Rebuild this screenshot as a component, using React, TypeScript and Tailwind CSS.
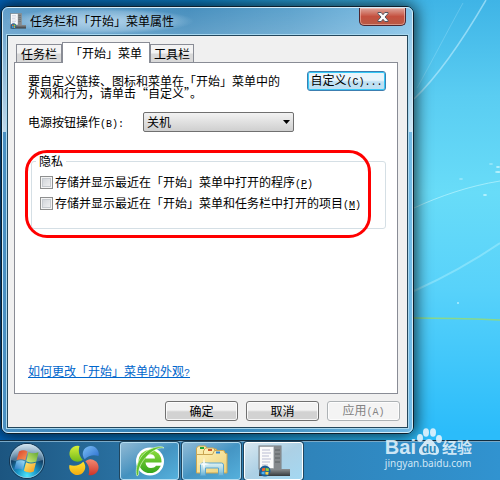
import type { ReactNode } from "react";

const TABS = [
  { id: "taskbar", label: "任务栏" },
  { id: "start", label: "「开始」菜单" },
  { id: "toolbars", label: "工具栏" },
];

const PRIVACY_OPTIONS = [
  { id: "programs", label: "存储并显示最近在「开始」菜单中打开的程序", accessKey: "P" },
  { id: "items", label: "存储并显示最近在「开始」菜单和任务栏中打开的项目", accessKey: "M" },
];

// Half-width latin, as the system font draws it next to 12px hanzi.
function Latin({ children }: { children: ReactNode }) {
  return (
    <span className="font-['Liberation_Mono','Noto_Sans_CJK_SC',monospace] text-[10px] leading-none">
      {children}
    </span>
  );
}

function TaskbarPanelIcon({ className }: { className: string }) {
  return (
    <svg viewBox="0 0 32 32" className={className} aria-hidden="true">
      <defs>
        <linearGradient id="panelBar" x1="0" y1="0" x2="0" y2="1">
          <stop offset="0" stopColor="#8b8f92" />
          <stop offset="1" stopColor="#35393c" />
        </linearGradient>
      </defs>
      <rect x="1" y="1" width="22" height="23" fill="#c9cdd0" stroke="#777c80" />
      <rect x="2" y="2" width="13" height="21" fill="#fafafa" />
      <path d="M4 5h8M4 8h9M4 11h7M4 14h9M4 17h8M4 20h6" stroke="#b9bcd2" />
      <rect x="16" y="1" width="7" height="23" fill="#85898c" />
      <path d="M17 5h5M17 9h5M17 13h5M17 17h5" stroke="#5b6063" />
      <rect x="1" y="24" width="31" height="7" fill="url(#panelBar)" />
      <circle cx="7" cy="26" r="5.5" fill="#1c5f96" />
      <path d="M4 23.5l3-.8v3l-3 .5z" fill="#f2642c" />
      <path d="M7.6 23l3.2.6v2.6l-3.2-.4z" fill="#8fd23e" />
      <path d="M3.6 27l3-.4v3l-3-.6z" fill="#50b4f0" />
      <path d="M7.4 26.8l3.2.3-.4 2.6-2.8-.2z" fill="#ffd042" />
    </svg>
  );
}

function StartOrb() {
  return (
    <svg viewBox="0 0 38 38" className="size-[38px]" aria-hidden="true">
      <defs>
        <radialGradient id="orb" cx="50%" cy="92%" r="85%">
          <stop offset="0" stopColor="#4fe6fb" />
          <stop offset="0.35" stopColor="#1793c6" />
          <stop offset="0.7" stopColor="#123e64" />
          <stop offset="1" stopColor="#5f8bab" />
        </radialGradient>
        <linearGradient id="orbShine" x1="0" y1="0" x2="0" y2="1">
          <stop offset="0" stopColor="#e3f0f8" stopOpacity="0.85" />
          <stop offset="1" stopColor="#b5d0e2" stopOpacity="0.25" />
        </linearGradient>
        <linearGradient id="flagRed" x1="0" y1="0" x2="1" y2="1">
          <stop offset="0" stopColor="#d8402a" />
          <stop offset="1" stopColor="#f99a58" />
        </linearGradient>
        <linearGradient id="flagGreen" x1="1" y1="0" x2="0" y2="1">
          <stop offset="0" stopColor="#5fa62e" />
          <stop offset="1" stopColor="#d3ec7c" />
        </linearGradient>
        <linearGradient id="flagBlue" x1="0" y1="1" x2="1" y2="0">
          <stop offset="0" stopColor="#1e72c0" />
          <stop offset="1" stopColor="#a3e2fa" />
        </linearGradient>
        <linearGradient id="flagYellow" x1="1" y1="1" x2="0" y2="0">
          <stop offset="0" stopColor="#f19a1d" />
          <stop offset="1" stopColor="#ffe975" />
        </linearGradient>
      </defs>
      <circle cx="19" cy="19" r="17.5" fill="url(#orb)" stroke="#11314c" />
      <circle cx="19" cy="19" r="16.6" fill="none" stroke="#a8cfe5" strokeOpacity="0.7" />
      <path d="M3 18a16 16 0 0 1 32 0c-9 3-22 3-32 0z" fill="url(#orbShine)" />
      <path d="M11 9.500c3-1.600 6-1.500 8.500 0L17.300 18.300c-2.500-1.500-5.500-1.500-8.700-.2z" fill="url(#flagRed)" />
      <path d="M20.500 10c3 1.700 6 1.600 10 .3L28.300 19.500c-3.500 1.400-6.500 1.200-10-.6z" fill="url(#flagGreen)" />
      <path d="M8.300 19.300c3-1.400 6-1.300 8.700.1L14.800 28c-2.500-1.500-5.200-1.500-8.700-.2z" fill="url(#flagBlue)" />
      <path d="M18 20.200c3 1.600 6.500 1.700 10 .3L25.700 29.500c-3.300 1.500-6.500 1.200-9.800-.7z" fill="url(#flagYellow)" />
    </svg>
  );
}

function PetalsIcon() {
  const petal = "M10.500 1A8 8 0 1 0 13.700 14.800Q8.200 9 10.500 1z";
  return (
    <svg viewBox="0 0 30 31" className="h-[31px] w-[30px]" aria-hidden="true">
      <defs>
        <linearGradient id="petalGreen" x1="0" y1="0" x2="0" y2="1">
          <stop offset="0" stopColor="#d8f03a" />
          <stop offset="1" stopColor="#6fb81c" />
        </linearGradient>
        <linearGradient id="petalBlue" x1="0" y1="1" x2="1" y2="0">
          <stop offset="0" stopColor="#7cc0f8" />
          <stop offset="1" stopColor="#2a6ccc" />
        </linearGradient>
        <linearGradient id="petalRed" x1="0" y1="1" x2="0" y2="0">
          <stop offset="0" stopColor="#f28a72" />
          <stop offset="1" stopColor="#cf3428" />
        </linearGradient>
        <linearGradient id="petalYellow" x1="1" y1="0" x2="0" y2="0">
          <stop offset="0" stopColor="#ffe52f" />
          <stop offset="1" stopColor="#f2aa12" />
        </linearGradient>
      </defs>
      <path d={petal} fill="url(#petalGreen)" />
      <path d={petal} fill="url(#petalBlue)" transform="rotate(90 15 15.5)" />
      <path d={petal} fill="url(#petalRed)" transform="rotate(180 15 15.5)" />
      <path d={petal} fill="url(#petalYellow)" transform="rotate(270 15 15.5)" />
    </svg>
  );
}

function BrowserIcon() {
  return (
    <svg viewBox="0 0 32 32" className="size-8" aria-hidden="true">
      <defs>
        <linearGradient id="browserGreen" x1="0" y1="0" x2="0" y2="1">
          <stop offset="0" stopColor="#8ddc3c" />
          <stop offset="1" stopColor="#35a51c" />
        </linearGradient>
      </defs>
      <circle cx="16" cy="16.500" r="14" fill="#ffffff" />
      <circle cx="16" cy="16.500" r="11.500" fill="url(#browserGreen)" />
      <path d="M11.500 13.500c.8-3 2.500-4.200 5-4.200s4.200 1.200 4.500 4.200z" fill="#ffffff" />
      <path d="M11.500 17.500H29v3.300h-7c-1 1.500-2.700 2.200-5 2.200-3.300 0-5.200-2-5.500-5.500z" fill="#ffffff" />
      <path
        d="M3 31C0 23 6 5 23 2c3-.6 6-.6 7 1-3-.6-6 .2-9 2C12 10 4 20 4.500 30z"
        fill="#62c22c"
        stroke="#e9ffd7"
        strokeWidth="0.6"
      />
    </svg>
  );
}

function ExplorerIcon() {
  return (
    <svg viewBox="0 0 34 32" className="h-8 w-[34px]" aria-hidden="true">
      <defs>
        <linearGradient id="folder" x1="0" y1="0" x2="1" y2="1">
          <stop offset="0" stopColor="#fff2b8" />
          <stop offset="1" stopColor="#ecd07a" />
        </linearGradient>
        <linearGradient id="stand" x1="0" y1="0" x2="0" y2="1">
          <stop offset="0" stopColor="#dff5fd" />
          <stop offset="1" stopColor="#67b5de" />
        </linearGradient>
      </defs>
      <path d="M1.500 27V3l2-2h7l2 3h9v23z" fill="url(#folder)" stroke="#c9a552" />
      <rect x="5" y="2" width="4" height="2" fill="#1fa534" />
      <path d="M8.500 27V6l2-3h8l2 3h9v21z" fill="url(#folder)" stroke="#c9a552" />
      <rect x="13" y="4" width="4" height="2" fill="#cb5528" />
      <path d="M1.500 28V9.500h16l2-4h9l2 3h1.500V28z" fill="url(#folder)" stroke="#c9a552" />
      <rect x="21" y="6.500" width="4" height="2" fill="#3287d5" />
      <path
        d="M5.500 30.500V20q0-2 2-2h19q2 0 2 2v10.500h-5V23h-13v7.500z"
        fill="url(#stand)"
        fillOpacity="0.9"
        stroke="#5ba6d0"
      />
      <path d="M9 12l1 6 5 1-5 1-1 6-1-6-5-1 5-1z" fill="#ffffff" fillOpacity="0.85" />
    </svg>
  );
}

function Wallpaper() {
  return (
    <svg
      viewBox="0 0 500 480"
      preserveAspectRatio="none"
      className="absolute inset-0 h-full w-full"
      aria-hidden="true"
    >
      <defs>
        <linearGradient id="skyDown" x1="0" y1="0" x2="0" y2="1">
          <stop offset="0" stopColor="#3fb4e6" />
          <stop offset="0.2" stopColor="#5acdf2" />
          <stop offset="0.4" stopColor="#68dcf8" />
          <stop offset="0.6" stopColor="#58d2fa" />
          <stop offset="0.9" stopColor="#2bbcfa" />
        </linearGradient>
        <linearGradient id="skyLeft" x1="0" y1="0" x2="1" y2="0">
          <stop offset="0" stopColor="#0262b8" />
          <stop offset="0.4" stopColor="#087fc9" stopOpacity="0.9" />
          <stop offset="0.83" stopColor="#2aa5da" stopOpacity="0" />
        </linearGradient>
      </defs>
      <rect width="500" height="480" fill="url(#skyDown)" />
      <rect width="500" height="480" fill="url(#skyLeft)" />
      <path d="M486 0C468 31 442 72 414 99" fill="none" stroke="#c2efff" strokeOpacity="0.6" strokeWidth="1.500" />
      <path d="M463 3C448 30 430 65 417 88" fill="none" stroke="#c2efff" strokeOpacity="0.25" />
      <path d="M414 208C440 196 469 186 500 181" fill="none" stroke="#c8f8ff" strokeOpacity="0.6" />
      <path d="M414 291C445 277 475 260 500 243" fill="none" stroke="#c8f8ff" strokeOpacity="0.35" strokeWidth="2" />
      <path d="M414 318C445 318 475 319 500 320" fill="none" stroke="#88d88c" strokeWidth="1.500" />
      <g fill="#d9fbff" fillOpacity="0.7">
        <ellipse cx="485" cy="195" rx="2" ry="1" />
        <ellipse cx="498" cy="172" rx="3" ry="1" />
        <ellipse cx="498" cy="167" rx="2" ry="1" />
        <ellipse cx="461" cy="179" rx="2" ry="1" fillOpacity="0.4" />
        <ellipse cx="491" cy="164" rx="2" ry="1" fillOpacity="0.4" />
        <circle cx="458" cy="303" r="1" />
      </g>
    </svg>
  );
}

function TitleBar() {
  return (
    <header className="flex h-[26px] items-start justify-between pr-[3px]">
      <div className="flex h-[26px] items-center gap-1 rounded-full bg-[radial-gradient(closest-side,rgba(225,242,255,0.65),rgba(225,242,255,0.3)_75%,transparent)] pr-5 pl-1">
        <TaskbarPanelIcon className="size-4" />
        <h1 className="text-xs text-black">任务栏和「开始」菜单属性</h1>
      </div>
      <button
        type="button"
        aria-label="关闭"
        className="flex h-[18px] w-[47px] items-center justify-center rounded-b-[5px] border border-t-0 border-[#4d2730] bg-linear-to-b from-[#dda69d] from-0% via-[#c4503f] via-50% to-[#b95a45] shadow-[inset_0_0_0_1px_rgba(255,220,210,0.45)]"
      >
        <svg viewBox="0 0 12 10" className="h-2.5 w-3" aria-hidden="true">
          <path
            d="M1 .5h3.200L6 2.700 7.800.5H11v1.200L8 5l3 3.300v1.200H7.800L6 7.300 4.200 9.500H1V8.300L4 5 1 1.700z"
            fill="#fbfbfb"
            stroke="#52545f"
          />
        </svg>
      </button>
    </header>
  );
}

function TabStrip() {
  return (
    <div role="tablist" className="flex items-end pl-0.5">
      {TABS.map((tab) =>
        tab.id === "start" ? (
          <button
            key={tab.id}
            type="button"
            role="tab"
            aria-selected="true"
            className="relative -mb-px h-[21px] w-[88px] border border-b-0 border-[#898c95] bg-white pb-px text-xs leading-none whitespace-nowrap"
          >
            {tab.label}
          </button>
        ) : (
          <button
            key={tab.id}
            type="button"
            role="tab"
            aria-selected="false"
            className="h-[18px] border border-b-0 border-[#898c95] bg-linear-to-b from-[#f3f3f3] from-45% to-[#d9d9d9] to-55% text-xs leading-none whitespace-nowrap first:w-[46px] last:w-[44px]"
          >
            {tab.label}
          </button>
        ),
      )}
    </div>
  );
}

function StartMenuPanel() {
  return (
    <div
      role="tabpanel"
      className="flex min-h-[332px] flex-col border border-[#898c95] bg-white pt-2 pr-[11px] pb-3.5 pl-[13px]"
    >
      <div className="flex items-start justify-between">
        <p className="max-w-[256px] pt-1 text-xs leading-3">
          要自定义链接、图标和菜单在「开始」菜单中的外观和行为，请单击“自定义”。
        </p>
        <button
          type="button"
          className="h-5 w-[79px] rounded-[3px] border border-[#3c7fb1] bg-linear-to-b from-[#eaf5fb] from-45% to-[#bfe0f2] to-55% text-xs leading-none whitespace-nowrap shadow-[inset_0_0_0_1px_#35c9f7]"
        >
          自定义<Latin>(C)...</Latin>
        </button>
      </div>

      <div className="mt-[13px] flex items-center">
        <label htmlFor="power" className="w-[115px] text-xs leading-5">
          电源按钮操作<Latin>(B):</Latin>
        </label>
        <div className="relative">
          <select
            id="power"
            defaultValue="shutdown"
            className="block h-5 w-[151px] appearance-none rounded-[2px] border border-[#707070] bg-linear-to-b from-[#f2f2f2] to-[#cfcfcf] pl-[3px] text-xs leading-none"
          >
            <option value="shutdown">关机</option>
            <option value="restart">重新启动</option>
            <option value="sleep">睡眠</option>
          </select>
          <svg
            viewBox="0 0 7 4"
            className="pointer-events-none absolute top-2 right-1 h-1 w-[7px]"
            aria-hidden="true"
          >
            <path d="M0 0h7L3.500 4z" fill="#000000" />
          </svg>
        </div>
      </div>

      <div className="relative mt-[22px] ml-[3px]">
        <fieldset className="h-[75px] rounded-[3px] border border-[#d5dfe5] px-2">
          <legend className="-ml-1 px-[3px] text-xs leading-[14px]">隐私</legend>
          <div className="flex flex-col gap-[5px] pt-1.5">
            {PRIVACY_OPTIONS.map((option) => (
              <label
                key={option.id}
                className="flex h-4 items-center gap-0.5 text-xs leading-4 whitespace-nowrap"
              >
                <input
                  type="checkbox"
                  className="size-[13px] shrink-0 appearance-none border border-[#8e8f8f] bg-linear-to-br from-[#cbcfd5] to-[#f6f6f6] shadow-[inset_0_0_0_1px_#f4f4f4,inset_0_0_0_2px_#c6cacf]"
                />
                <span>
                  {option.label}
                  <Latin>
                    (<u>{option.accessKey}</u>)
                  </Latin>
                </span>
              </label>
            ))}
          </div>
        </fieldset>
        {/* highlight ring over the privacy group */}
        <div className="pointer-events-none absolute -top-1 right-[15px] -bottom-[9px] -left-1.5 rounded-[22px] border-3 border-[#ff0000]" />
      </div>

      <a href="#help" className="mt-auto self-start text-xs leading-4 text-[#0066cc] underline">
        如何更改「开始」菜单的外观<Latin>?</Latin>
      </a>
    </div>
  );
}

function DialogButton({ children, disabled }: { children: ReactNode; disabled?: boolean }) {
  return (
    <button
      type="button"
      disabled={disabled}
      className="h-5 w-[73px] rounded-[3px] border border-[#707070] bg-linear-to-b from-[#f2f2f2] from-45% to-[#d2d2d2] to-55% text-xs leading-none shadow-[inset_0_0_0_1px_rgba(255,255,255,0.8)] disabled:border-[#adb2b5] disabled:bg-[#f4f4f4] disabled:bg-none disabled:text-[#838383]"
    >
      {children}
    </button>
  );
}

function PropertiesDialog() {
  return (
    <section className="relative ml-px w-full max-w-[413px] rounded-[7px] border border-[#0d202d] shadow-[0_0_16px_2px_rgba(0,0,0,0.75)]">
      <div className="rounded-[6px] border border-[#d5ecf8] bg-[linear-gradient(to_bottom,rgba(255,255,255,0.12)_0px,rgba(255,255,255,0.65)_124px,transparent_124px),linear-gradient(to_right,#4a90c2_0%,#2f80b5_45%,#4896c6_70%,#74bae4_100%)] px-[3px] pb-[3px]">
        <TitleBar />
        <div className="border border-[#a9d8f0]">
          <div className="border border-[#24475c] bg-[#f0f0f0] pt-1.5 pr-[9px] pb-1.5 pl-1.5">
            <TabStrip />
            <StartMenuPanel />
            <div className="-mr-0.5 flex justify-end gap-2 pt-[7px]">
              <DialogButton>确定</DialogButton>
              <DialogButton>取消</DialogButton>
              <DialogButton disabled>
                应用<Latin>(A)</Latin>
              </DialogButton>
            </div>
          </div>
        </div>
      </div>
    </section>
  );
}

function TaskButton({ label, active, children }: { label: string; active?: boolean; children: ReactNode }) {
  return (
    <button
      type="button"
      aria-label={label}
      data-active={active}
      className="flex h-[38px] w-[59px] items-center justify-center rounded-[3px] border border-[#b4dcf0] bg-linear-to-br from-[#a8cbe0]/80 via-[#4e9fcb]/70 to-[#55b0dc] shadow-[0_0_0_1px_#20465f] data-[active=true]:border-white data-[active=true]:from-[#d8e7f0] data-[active=true]:via-[#acd0e5] data-[active=true]:to-[#a4d8f2]"
    >
      {children}
    </button>
  );
}

function Taskbar() {
  return (
    <nav className="relative flex h-10 items-center border-t border-[#102c40] bg-linear-to-r from-[#1c5580] via-[#2d77a9] via-30% to-[#3193d0] shadow-[inset_0_1px_0_#7ba9c6]">
      <button type="button" aria-label="开始" className="ml-2">
        <StartOrb />
      </button>
      <button type="button" aria-label="快速启动" className="ml-[23px]">
        <PetalsIcon />
      </button>
      <div className="ml-[21px] flex gap-[3px]">
        <TaskButton label="浏览器">
          <BrowserIcon />
        </TaskButton>
        <TaskButton label="资源管理器">
          <ExplorerIcon />
        </TaskButton>
        <TaskButton label="任务栏属性" active>
          <TaskbarPanelIcon className="size-8" />
        </TaskButton>
      </div>
    </nav>
  );
}

function Watermark() {
  return (
    <div className="pointer-events-none absolute right-7 bottom-2.5 flex flex-col text-[#e3f3fc]/90">
      <div className="flex h-7 items-end">
        <span className="font-['Liberation_Sans',sans-serif] text-xl leading-[18px] font-bold">Bai</span>
        <svg viewBox="0 0 26 28" className="h-7 w-[26px]" aria-hidden="true">
          <g fill="currentColor">
            <ellipse cx="4" cy="10" rx="3" ry="4" />
            <ellipse cx="10" cy="4.500" rx="3" ry="4.200" />
            <ellipse cx="17" cy="4.500" rx="3" ry="4.200" />
            <ellipse cx="23" cy="11" rx="3" ry="4" />
            <path d="M13 11c4 0 5 4 8 7s3 9-2 9c-3 0-4-1-6-1s-3 1-6 1c-5 0-5-6-2-9s4-7 8-7z" />
          </g>
          <text
            x="13"
            y="25"
            textAnchor="middle"
            fontFamily="Liberation Sans, sans-serif"
            fontSize="12"
            fontWeight="bold"
            fill="#2f86b8"
          >
            du
          </text>
        </svg>
        <span className="text-[15px] leading-[18px] font-bold">经验</span>
      </div>
      <span className="font-['Noto_Sans',sans-serif] text-[10px] leading-[14px]">jingyan.baidu.com</span>
    </div>
  );
}

export default function App() {
  return (
    <div
      lang="zh-CN"
      className="relative flex min-h-screen flex-col overflow-hidden font-['Noto_Sans_CJK_SC',sans-serif] text-black"
    >
      <Wallpaper />
      <main className="flex-1 pt-1.5 pb-[5px]">
        <PropertiesDialog />
      </main>
      <Taskbar />
      <Watermark />
    </div>
  );
}
